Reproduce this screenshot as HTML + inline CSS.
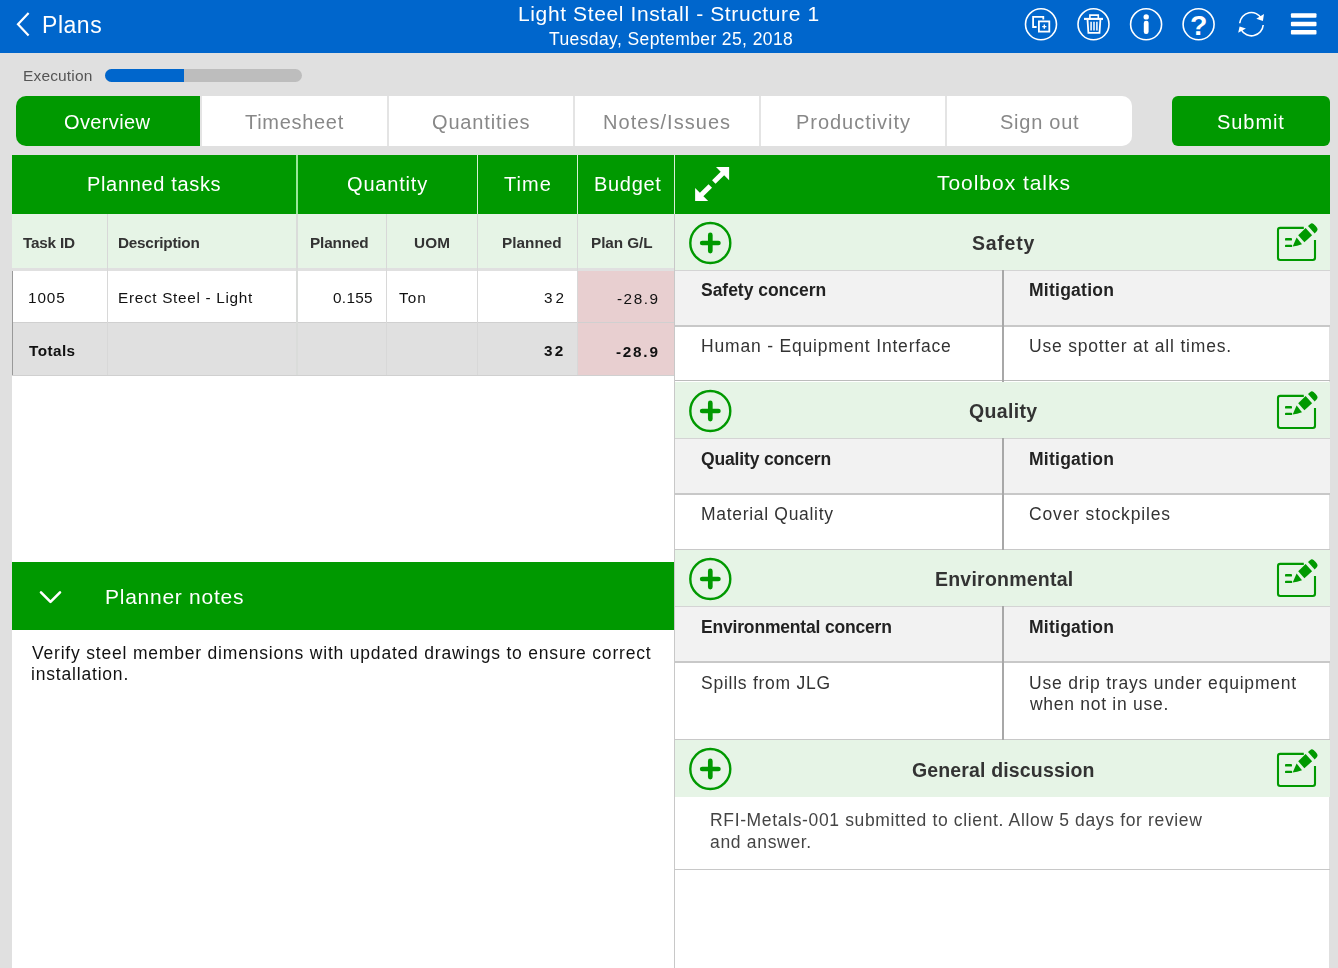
<!DOCTYPE html>
<html>
<head>
<meta charset="utf-8">
<title>Plan Overview</title>
<style>
*{box-sizing:border-box;margin:0;padding:0}
html,body{width:1338px;height:968px;overflow:hidden}
body{background:#e0e0e0;font-family:"Liberation Sans",sans-serif;color:#222;position:relative}
.abs{position:absolute}
.t{position:absolute;white-space:nowrap;line-height:1;will-change:transform}
#hdr{left:0;top:0;width:1338px;height:53px;background:#0066cc}
.w{color:#fff}
.tab{position:absolute;top:96px;height:50px;background:#fff;color:#888;font-size:20px;text-align:center;line-height:53px}
.grn{background:#009900}
.lg{background:#e6f4e6}
.b{font-weight:bold}
.vline{position:absolute;width:1px;background:#d8d8d8}
.hline{position:absolute;height:1px;background:#c8c8c8}
</style>
</head>
<body>
<!-- HEADER -->
<div id="hdr" class="abs"></div>
<svg class="abs" style="left:14px;top:10px" width="20" height="30" viewBox="0 0 20 30"><path d="M14.6 3 L4 14.2 L14.6 25.4" fill="none" stroke="#fff" stroke-width="2.2" stroke-linecap="butt" stroke-linejoin="miter"/></svg>

<!-- header icons -->
<svg class="abs" style="left:1020px;top:3px" width="300" height="44" viewBox="1020 3 300 44" id="icons">
  <g fill="none" stroke="#fff" stroke-width="1.6">
    <circle cx="1041" cy="24.3" r="15.5"/>
    <circle cx="1093.5" cy="24.3" r="15.5"/>
    <circle cx="1146.1" cy="24.3" r="15.5"/>
    <circle cx="1198.6" cy="24.3" r="15.5"/>
  </g>
  <!-- copy icon -->
  <g fill="none" stroke="#fff" stroke-width="1.8" stroke-linejoin="miter">
    <path d="M1036.6 27 H1033.1 V16.8 H1043.3 V19.6"/>
    <rect x="1038.9" y="21.4" width="10.4" height="10.2"/>
    <path d="M1042.2 26.6 H1046.4 M1044.3 24.5 V28.7" stroke-width="1.4"/>
  </g>
  <!-- trash -->
  <g fill="none" stroke="#fff" stroke-width="1.6">
    <path d="M1084 18.9 H1103" stroke-width="2.1"/>
    <path d="M1089.9 18 V15.1 H1098.3 V18"/>
    <path d="M1087.5 19.5 L1088.4 32.9 H1099.5 L1100.4 19.5" stroke-width="1.8"/>
    <path d="M1091.1 21.8 V30.4 M1094 21.8 V30.4 M1096.9 21.8 V30.4" stroke-width="1.5"/>
  </g>
  <!-- info -->
  <circle cx="1146.2" cy="16.9" r="2.7" fill="#fff"/>
  <rect x="1143.8" y="20.8" width="4.8" height="13.2" rx="2.2" fill="#fff"/>
  <!-- question -->
  <text x="1198.8" y="34.6" font-family="Liberation Sans, sans-serif" font-weight="bold" font-size="28.5" fill="#fff" text-anchor="middle">?</text>
  <!-- refresh -->
  <g fill="none" stroke="#fff" stroke-width="1.6">
    <path d="M1239.7 23.2 A11.7 11.7 0 0 1 1261.6 18.6"/>
    <path d="M1263.2 25 A11.7 11.7 0 0 1 1241.3 29.8"/>
  </g>
  <path d="M1264 14 L1262.9 20.9 L1256.3 18.7 Z" fill="#fff"/>
  <path d="M1238.2 32.7 L1239.6 26.5 L1245.9 28.5 Z" fill="#fff"/>
  <!-- hamburger -->
  <g fill="#fff">
    <rect x="1290.9" y="13.2" width="25.6" height="4.5" rx="1"/>
    <rect x="1290.9" y="21.7" width="25.6" height="4.5" rx="1"/>
    <rect x="1290.9" y="30.1" width="25.6" height="4.5" rx="1"/>
  </g>
</svg>

<!-- EXECUTION -->
<div class="abs" style="left:105px;top:69px;width:197px;height:13px;border-radius:6.5px;background:#bdbdbd;overflow:hidden"><div style="width:79px;height:13px;background:#0066cc"></div></div>

<!-- TABS -->
<div class="abs" style="left:16px;top:96px;width:1116px;height:50px;border-radius:10px;background:#e4e4e4;overflow:hidden"></div>
<div class="tab grn" style="left:16px;width:184px;color:#fff;border-radius:10px 0 0 10px"></div>
<div class="tab" style="left:202px;width:185px"></div>
<div class="tab" style="left:389px;width:184px"></div>
<div class="tab" style="left:575px;width:184px"></div>
<div class="tab" style="left:761px;width:184px"></div>
<div class="tab" style="left:947px;width:185px;border-radius:0 10px 10px 0"></div>
<div class="tab grn" style="left:1172px;width:158px;color:#fff;border-radius:6px"></div>

<!-- LEFT PANEL -->
<div class="abs" style="left:12px;top:155px;width:662px;height:813px;background:#fff"></div>
<div class="abs grn" style="left:12px;top:155px;width:662px;height:59px"></div>
<div class="abs lg" style="left:12px;top:214px;width:662px;height:54px"></div>
<div class="abs" style="left:12px;top:268px;width:662px;height:3px;background:#e0e0e0"></div>
<div class="abs" style="left:12px;top:322px;width:662px;height:53px;background:#e0e0e0"></div>
<div class="abs" style="left:577px;top:271px;width:97px;height:104px;background:#e8cfd0"></div>
<div class="hline" style="left:12px;top:322px;width:662px;background:#d0d0d0"></div>
<div class="hline" style="left:12px;top:375px;width:662px;background:#d0d0d0"></div>
<div class="abs" style="left:12px;top:271px;width:1px;height:104px;background:#999"></div>
<!-- header col separators (white) -->
<div class="abs" style="left:296px;top:155px;width:2px;height:59px;background:#99e699"></div>
<div class="abs" style="left:477px;top:155px;width:1px;height:59px;background:#d4f0d4"></div>
<div class="abs" style="left:577px;top:155px;width:1px;height:59px;background:#d4f0d4"></div>
<!-- body col separators -->
<div class="vline" style="left:107px;top:214px;height:161px"></div>
<div class="vline" style="left:296px;top:214px;height:161px;width:2px;background:#dadcda"></div>
<div class="vline" style="left:386px;top:214px;height:161px"></div>
<div class="vline" style="left:477px;top:214px;height:161px"></div>
<div class="vline" style="left:577px;top:214px;height:161px"></div>





<!-- planner notes -->
<div class="abs grn" style="left:12px;top:562px;width:662px;height:68px"></div>
<svg class="abs" style="left:36px;top:586px" width="30" height="22" viewBox="0 0 30 22"><path d="M5 6.3 L14.5 15.8 L24 6.3" fill="none" stroke="#fff" stroke-width="2.6" stroke-linecap="round" stroke-linejoin="round"/></svg>

<!-- RIGHT PANEL -->
<div class="abs" style="left:674px;top:155px;width:655px;height:813px;background:#fff"></div>
<div class="abs" style="left:674px;top:155px;width:1px;height:813px;background:#c8c8c8"></div>
<div class="abs grn" style="left:675px;top:155px;width:655px;height:59px"></div>
<div class="abs" style="left:674px;top:155px;width:1px;height:59px;background:#d8eed8"></div>
<svg class="abs" style="left:692px;top:164px" width="40" height="40" viewBox="692 164 40 40" id="expand">
  <g fill="#fff" stroke="none">
    <path d="M716 167.1 H729.1 V180.2 Z"/>
    <path d="M695.1 188 V201.1 H708.2 Z"/>
  </g>
  <path d="M713.8 182.1 L724.5 171.4 M710.3 185.9 L699.6 196.6" stroke="#fff" stroke-width="4.9" fill="none"/>
</svg>
<!-- Safety -->
<div class="abs lg" style="left:675px;top:214px;width:655px;height:56px"></div>
<svg class="abs" style="left:687px;top:219.8px" width="46" height="46" viewBox="0 0 46 46"><circle cx="23.3" cy="23" r="20" fill="none" stroke="#009900" stroke-width="2.4"/><path d="M15.2 23 H31.4 M23.3 14.9 V31.1" stroke="#009900" stroke-width="4.7" stroke-linecap="round" fill="none"/></svg>
<svg class="abs" style="left:1270px;top:218px" width="56" height="48" viewBox="0 0 56 48"><path d="M33.8 9.9 H10.2 Q8 9.9 8 12.1 V39.8 Q8 42 10.2 42 H42.8 Q45 42 45 39.8 V22.1" fill="none" stroke="#009900" stroke-width="2.1"/><g fill="#009900"><rect x="15" y="20.1" width="7" height="2.5" rx="0.9"/><rect x="15" y="26.7" width="7.2" height="2.4" rx="0.9"/><path d="M22.7 28.5 L26.6 19.5 L32 26.3 Q27 28 22.7 28.5 Z"/><path d="M28.2 17.3 L35.6 10.1 L42.1 17.3 L34.4 24.3 Z"/><path d="M38 8 L40.3 5.9 Q41.8 4.7 43.6 6 Q46 8 47.2 10 Q48 11.6 47 13 L44.7 15.5 Z"/></g></svg>
<div class="abs" style="left:675px;top:270px;width:655px;height:56px;background:#f2f2f2"></div>
<div class="hline" style="left:675px;top:270px;width:655px;background:#d4d4d4"></div>
<div class="hline" style="left:675px;top:325px;width:655px;height:2px;background:#c8c8c8"></div>
<div class="hline" style="left:675px;top:380px;width:655px;background:#bcbcbc"></div>
<div class="abs" style="left:1002px;top:270px;width:2px;height:112px;background:#a8a8a8"></div>
<!-- Quality -->
<div class="abs lg" style="left:675px;top:382px;width:655px;height:56px"></div>
<svg class="abs" style="left:687px;top:387.8px" width="46" height="46" viewBox="0 0 46 46"><circle cx="23.3" cy="23" r="20" fill="none" stroke="#009900" stroke-width="2.4"/><path d="M15.2 23 H31.4 M23.3 14.9 V31.1" stroke="#009900" stroke-width="4.7" stroke-linecap="round" fill="none"/></svg>
<svg class="abs" style="left:1270px;top:386px" width="56" height="48" viewBox="0 0 56 48"><path d="M33.8 9.9 H10.2 Q8 9.9 8 12.1 V39.8 Q8 42 10.2 42 H42.8 Q45 42 45 39.8 V22.1" fill="none" stroke="#009900" stroke-width="2.1"/><g fill="#009900"><rect x="15" y="20.1" width="7" height="2.5" rx="0.9"/><rect x="15" y="26.7" width="7.2" height="2.4" rx="0.9"/><path d="M22.7 28.5 L26.6 19.5 L32 26.3 Q27 28 22.7 28.5 Z"/><path d="M28.2 17.3 L35.6 10.1 L42.1 17.3 L34.4 24.3 Z"/><path d="M38 8 L40.3 5.9 Q41.8 4.7 43.6 6 Q46 8 47.2 10 Q48 11.6 47 13 L44.7 15.5 Z"/></g></svg>
<div class="abs" style="left:675px;top:438px;width:655px;height:56px;background:#f2f2f2"></div>
<div class="hline" style="left:675px;top:438px;width:655px;background:#d4d4d4"></div>
<div class="hline" style="left:675px;top:493px;width:655px;height:2px;background:#c8c8c8"></div>
<div class="hline" style="left:675px;top:549px;width:655px;background:#c8c8c8"></div>
<div class="abs" style="left:1002px;top:438px;width:2px;height:112px;background:#a8a8a8"></div>
<!-- Environmental -->
<div class="abs lg" style="left:675px;top:550px;width:655px;height:56px"></div>
<svg class="abs" style="left:687px;top:555.8px" width="46" height="46" viewBox="0 0 46 46"><circle cx="23.3" cy="23" r="20" fill="none" stroke="#009900" stroke-width="2.4"/><path d="M15.2 23 H31.4 M23.3 14.9 V31.1" stroke="#009900" stroke-width="4.7" stroke-linecap="round" fill="none"/></svg>
<svg class="abs" style="left:1270px;top:554px" width="56" height="48" viewBox="0 0 56 48"><path d="M33.8 9.9 H10.2 Q8 9.9 8 12.1 V39.8 Q8 42 10.2 42 H42.8 Q45 42 45 39.8 V22.1" fill="none" stroke="#009900" stroke-width="2.1"/><g fill="#009900"><rect x="15" y="20.1" width="7" height="2.5" rx="0.9"/><rect x="15" y="26.7" width="7.2" height="2.4" rx="0.9"/><path d="M22.7 28.5 L26.6 19.5 L32 26.3 Q27 28 22.7 28.5 Z"/><path d="M28.2 17.3 L35.6 10.1 L42.1 17.3 L34.4 24.3 Z"/><path d="M38 8 L40.3 5.9 Q41.8 4.7 43.6 6 Q46 8 47.2 10 Q48 11.6 47 13 L44.7 15.5 Z"/></g></svg>
<div class="abs" style="left:675px;top:606px;width:655px;height:56px;background:#f2f2f2"></div>
<div class="hline" style="left:675px;top:606px;width:655px;background:#d4d4d4"></div>
<div class="hline" style="left:675px;top:661px;width:655px;height:2px;background:#c8c8c8"></div>
<div class="hline" style="left:675px;top:739px;width:655px;background:#c8c8c8"></div>
<div class="abs" style="left:1002px;top:606px;width:2px;height:134px;background:#a8a8a8"></div>
<!-- General -->
<div class="abs lg" style="left:675px;top:740px;width:655px;height:57px"></div>
<svg class="abs" style="left:687px;top:745.8px" width="46" height="46" viewBox="0 0 46 46"><circle cx="23.3" cy="23" r="20" fill="none" stroke="#009900" stroke-width="2.4"/><path d="M15.2 23 H31.4 M23.3 14.9 V31.1" stroke="#009900" stroke-width="4.7" stroke-linecap="round" fill="none"/></svg>
<svg class="abs" style="left:1270px;top:744px" width="56" height="48" viewBox="0 0 56 48"><path d="M33.8 9.9 H10.2 Q8 9.9 8 12.1 V39.8 Q8 42 10.2 42 H42.8 Q45 42 45 39.8 V22.1" fill="none" stroke="#009900" stroke-width="2.1"/><g fill="#009900"><rect x="15" y="20.1" width="7" height="2.5" rx="0.9"/><rect x="15" y="26.7" width="7.2" height="2.4" rx="0.9"/><path d="M22.7 28.5 L26.6 19.5 L32 26.3 Q27 28 22.7 28.5 Z"/><path d="M28.2 17.3 L35.6 10.1 L42.1 17.3 L34.4 24.3 Z"/><path d="M38 8 L40.3 5.9 Q41.8 4.7 43.6 6 Q46 8 47.2 10 Q48 11.6 47 13 L44.7 15.5 Z"/></g></svg>
<div class="hline" style="left:675px;top:869px;width:655px;background:#c8c8c8"></div>
<div class="t" id="plans" style="left:41.78px;top:13.53px;font-size:23px;color:#fff;letter-spacing:0.540px">Plans</div>
<div class="t" id="title" style="left:517.82px;top:2.82px;font-size:21px;color:#fff;letter-spacing:0.619px">Light Steel Install - Structure 1</div>
<div class="t" id="subtitle" style="left:549.06px;top:31.29px;font-size:17.5px;color:#fff;letter-spacing:0.395px">Tuesday, September 25, 2018</div>
<div class="t" id="exec" style="left:23.18px;top:68.28px;font-size:15.5px;color:#555;letter-spacing:0.158px">Execution</div>
<div class="t" id="tb0" style="left:64.18px;top:111.57px;font-size:20px;color:#fff;letter-spacing:0.360px">Overview</div>
<div class="t" id="tb1" style="left:244.60px;top:111.57px;font-size:20px;color:#888;letter-spacing:0.698px">Timesheet</div>
<div class="t" id="tb2" style="left:432.12px;top:111.57px;font-size:20px;color:#888;letter-spacing:0.840px">Quantities</div>
<div class="t" id="tb3" style="left:603.18px;top:111.57px;font-size:20px;color:#888;letter-spacing:1.047px">Notes/Issues</div>
<div class="t" id="tb4" style="left:796.12px;top:111.57px;font-size:20px;color:#888;letter-spacing:0.965px">Productivity</div>
<div class="t" id="tb5" style="left:1000.16px;top:111.57px;font-size:20px;color:#888;letter-spacing:0.746px">Sign out</div>
<div class="t" id="tb6" style="left:1217.12px;top:111.57px;font-size:20px;color:#fff;letter-spacing:0.936px">Submit</div>
<div class="t" id="h1" style="left:87.16px;top:174.37px;font-size:20px;color:#fff;letter-spacing:0.660px">Planned tasks</div>
<div class="t" id="h2" style="left:346.64px;top:174.37px;font-size:20px;color:#fff;letter-spacing:0.823px">Quantity</div>
<div class="t" id="h3" style="left:504.04px;top:174.37px;font-size:20px;color:#fff;letter-spacing:1.080px">Time</div>
<div class="t" id="h4" style="left:593.62px;top:174.37px;font-size:20px;color:#fff;letter-spacing:0.684px">Budget</div>
<div class="t b" id="s1" style="left:22.60px;top:235.15px;font-size:15.3px;color:#333;letter-spacing:-0.210px">Task ID</div>
<div class="t b" id="s2" style="left:118.14px;top:235.15px;font-size:15.3px;color:#333;letter-spacing:-0.234px">Description</div>
<div class="t b" id="s3" style="left:310.20px;top:235.15px;font-size:15.3px;color:#333;letter-spacing:-0.150px">Planned</div>
<div class="t b" id="s4" style="left:414.14px;top:235.15px;font-size:15.3px;color:#333;letter-spacing:0.090px">UOM</div>
<div class="t b" id="s5" style="left:501.66px;top:235.15px;font-size:15.3px;color:#333;letter-spacing:0.030px">Planned</div>
<div class="t b" id="s6" style="left:591.16px;top:235.15px;font-size:15.3px;color:#333;letter-spacing:-0.077px">Plan G/L</div>
<div class="t" id="r1" style="left:27.68px;top:290.15px;font-size:15.3px;color:#111;letter-spacing:0.900px">1005</div>
<div class="t" id="r2" style="left:118.14px;top:290.15px;font-size:15.3px;color:#111;letter-spacing:0.700px">Erect Steel - Light</div>
<div class="t" id="r3" style="left:333.08px;top:290.15px;font-size:15.3px;color:#111;letter-spacing:0.315px">0.155</div>
<div class="t" id="r4" style="left:399.02px;top:290.15px;font-size:15.3px;color:#111;letter-spacing:0.990px">Ton</div>
<div class="t" id="r5" style="left:543.64px;top:290.15px;font-size:15.3px;color:#111;letter-spacing:3.060px">32</div>
<div class="t" id="r6" style="left:617.16px;top:291.25px;font-size:15.3px;color:#111;letter-spacing:1.530px">-28.9</div>
<div class="t b" id="t1" style="left:28.58px;top:342.65px;font-size:15.3px;color:#111;letter-spacing:0.432px">Totals</div>
<div class="t b" id="t5" style="left:544.04px;top:342.85px;font-size:15.3px;color:#111;letter-spacing:2.160px">32</div>
<div class="t b" id="t6" style="left:616.06px;top:344.05px;font-size:15.3px;color:#111;letter-spacing:1.755px">-28.9</div>
<div class="t" id="pn" style="left:104.74px;top:586.02px;font-size:21px;color:#fff;letter-spacing:0.735px">Planner notes</div>
<div class="t" id="n1" style="left:32.10px;top:645.09px;font-size:17.5px;color:#111;letter-spacing:0.803px">Verify steel member dimensions with updated drawings to ensure correct</div>
<div class="t" id="n2" style="left:31.20px;top:666.39px;font-size:17.5px;color:#111;letter-spacing:0.810px">installation.</div>
<div class="t" id="tt" style="left:937.06px;top:171.72px;font-size:21px;color:#fff;letter-spacing:0.960px">Toolbox talks</div>
<div class="t b" id="sat" style="left:971.70px;top:233.59px;font-size:19.5px;color:#333;letter-spacing:0.756px">Safety</div>
<div class="t b" id="sac1" style="left:700.68px;top:282.49px;font-size:17.5px;color:#222;letter-spacing:-0.028px">Safety concern</div>
<div class="t b" id="sac2" style="left:1029.20px;top:282.49px;font-size:17.5px;color:#222;letter-spacing:0.260px">Mitigation</div>
<div class="t" id="sad10" style="left:700.70px;top:338.29px;font-size:17.5px;color:#333;letter-spacing:0.817px">Human - Equipment Interface</div>
<div class="t" id="sad20" style="left:1029.20px;top:338.29px;font-size:17.5px;color:#333;letter-spacing:0.802px">Use spotter at all times.</div>
<div class="t b" id="qut" style="left:968.70px;top:401.59px;font-size:19.5px;color:#333;letter-spacing:0.330px">Quality</div>
<div class="t b" id="quc1" style="left:700.68px;top:450.79px;font-size:17.5px;color:#222;letter-spacing:-0.154px">Quality concern</div>
<div class="t b" id="quc2" style="left:1029.20px;top:450.79px;font-size:17.5px;color:#222;letter-spacing:0.260px">Mitigation</div>
<div class="t" id="qud10" style="left:700.68px;top:506.39px;font-size:17.5px;color:#333;letter-spacing:0.696px">Material Quality</div>
<div class="t" id="qud20" style="left:1029.20px;top:506.39px;font-size:17.5px;color:#333;letter-spacing:0.840px">Cover stockpiles</div>
<div class="t b" id="ent" style="left:934.64px;top:569.59px;font-size:19.5px;color:#333;letter-spacing:0.225px">Environmental</div>
<div class="t b" id="enc1" style="left:700.68px;top:619.29px;font-size:17.5px;color:#222;letter-spacing:-0.180px">Environmental concern</div>
<div class="t b" id="enc2" style="left:1029.20px;top:619.29px;font-size:17.5px;color:#222;letter-spacing:0.260px">Mitigation</div>
<div class="t" id="end10" style="left:700.68px;top:674.89px;font-size:17.5px;color:#333;letter-spacing:0.746px">Spills from JLG</div>
<div class="t" id="end20" style="left:1029.20px;top:674.89px;font-size:17.5px;color:#333;letter-spacing:0.794px">Use drip trays under equipment</div>
<div class="t" id="end21" style="left:1030.10px;top:696.39px;font-size:17.5px;color:#333;letter-spacing:0.720px">when not in use.</div>
<div class="t b" id="get" style="left:912.14px;top:761.29px;font-size:19.5px;color:#333;letter-spacing:0.148px">General discussion</div>
<div class="t" id="g1" style="left:709.68px;top:811.59px;font-size:17.5px;color:#444;letter-spacing:0.649px">RFI-Metals-001 submitted to client. Allow 5 days for review</div>
<div class="t" id="g2" style="left:709.68px;top:834.39px;font-size:17.5px;color:#444;letter-spacing:0.684px">and answer.</div>
</body>
</html>
